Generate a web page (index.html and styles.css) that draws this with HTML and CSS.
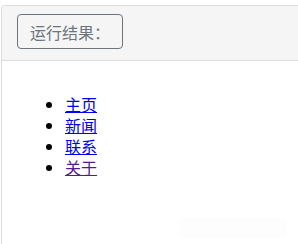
FILE: index.html
```html
<!DOCTYPE html>
<html lang="zh-CN">
<head>
    <meta charset="UTF-8">
    <meta name="viewport" content="width=device-width, initial-scale=1.0">
    <title>运行结果</title>
    <link rel="stylesheet" href="styles.css">
</head>
<body>
    <div class="panel">
        <div class="panel-head">
            <button class="btn-result">运行结果：</button>
        </div>
        <div class="panel-body">
            <ul class="nav-list">
                <li><a href="#home">主页</a></li>
                <li><a href="#news">新闻</a></li>
                <li><a href="#contact">联系</a></li>
                <li><a href="#about" class="visited">关于</a></li>
            </ul>
            <div class="faint-box"></div>
        </div>
    </div>
</body>
</html>
```

FILE: styles.css
```css
body {
    margin: 0;
    background: #fff;
    font-family: "Liberation Serif", "Noto Sans CJK SC", serif;
}
.panel {
    margin: 5px 0 0 1px;
    border: 1px solid #ddd;
    border-right: none;
    border-bottom: none;
    border-radius: 4px 0 0 0;
    height: 238px;
}
.panel-head {
    background: #f5f5f5;
    border-bottom: 1px solid #ddd;
    padding: 8px 0 11px 15px;
    border-radius: 4px 0 0 0;
}
.btn-result {
    font-family: "Noto Sans CJK SC", sans-serif;
    font-size: 16px;
    color: #6c757d;
    background: #f5f5f5;
    border: 1px solid #6c757d;
    border-radius: 4px;
    height: 35px;
    width: 106px;
    padding: 0 0 0 12px;
    text-align: left;
    line-height: 1;
}
.panel-body {
    padding: 17px 0 0 0;
    position: relative;
}
.nav-list {
    margin: 16px 0;
    padding-left: 63px;
    font-size: 16px;
    line-height: 21px;
    font-family: "Noto Sans CJK SC", sans-serif;
}
.nav-list a {
    color: #0000ee;
}
.nav-list a.visited {
    color: #551a8b;
}
.faint-box {
    position: absolute;
    left: 178px;
    top: 157px;
    width: 106px;
    height: 20px;
    background: #fdfdfd;
}
```
